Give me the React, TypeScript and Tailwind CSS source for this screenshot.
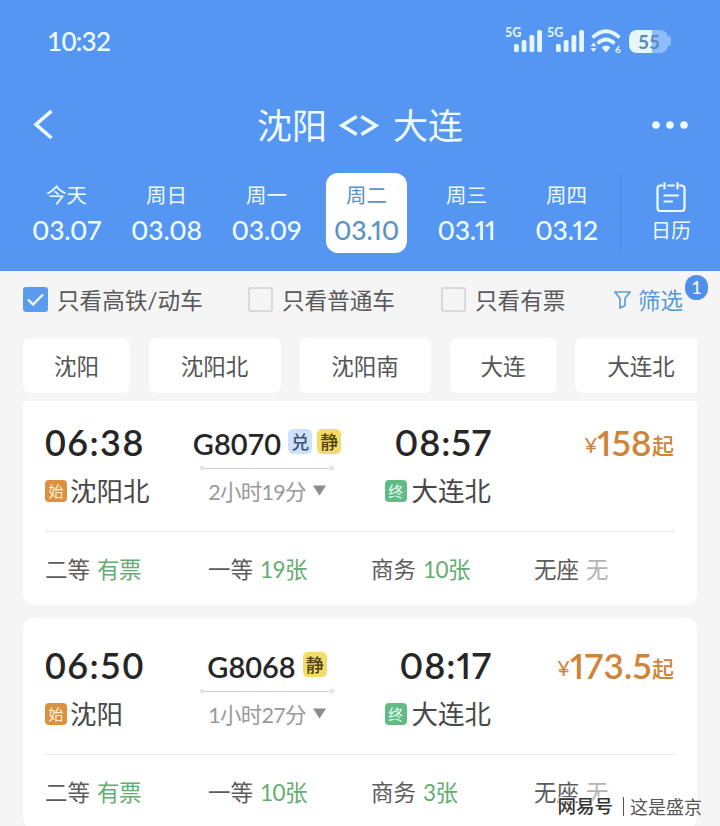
import clsx from "clsx";

interface Seat {
  name: string;
  left: string;
  soldOut?: boolean;
}

interface Train {
  code: string;
  tags: ("兑" | "静")[];
  depart: string;
  arrive: string;
  from: string;
  to: string;
  duration: string;
  price: string;
  seats: Seat[];
}

const days = [
  { label: "今天", date: "03.07" },
  { label: "周日", date: "03.08" },
  { label: "周一", date: "03.09" },
  { label: "周二", date: "03.10", active: true },
  { label: "周三", date: "03.11" },
  { label: "周四", date: "03.12" },
];

const stations = [
  { name: "沈阳", width: "w-[107px]" },
  { name: "沈阳北", width: "w-[132px]" },
  { name: "沈阳南", width: "w-[132px]" },
  { name: "大连", width: "w-[107px]" },
  { name: "大连北", width: "w-[132px]" },
];

const trains: Train[] = [
  {
    code: "G8070",
    tags: ["兑", "静"],
    depart: "06:38",
    arrive: "08:57",
    from: "沈阳北",
    to: "大连北",
    duration: "2小时19分",
    price: "158",
    seats: [
      { name: "二等", left: "有票" },
      { name: "一等", left: "19张" },
      { name: "商务", left: "10张" },
      { name: "无座", left: "无", soldOut: true },
    ],
  },
  {
    code: "G8068",
    tags: ["静"],
    depart: "06:50",
    arrive: "08:17",
    from: "沈阳",
    to: "大连北",
    duration: "1小时27分",
    price: "173.5",
    seats: [
      { name: "二等", left: "有票" },
      { name: "一等", left: "10张" },
      { name: "商务", left: "3张" },
      { name: "无座", left: "无", soldOut: true },
    ],
  },
];

const Signal = () => (
  <svg width="42" height="28" viewBox="0 0 42 28" className="overflow-visible text-[#e6f6ff]">
    <text x="0" y="10" fontSize="12.5" fontWeight="700" fill="currentColor">
      5G
    </text>
    <g fill="currentColor">
      <rect x="9" y="17" width="4.8" height="8" rx="1.6" />
      <rect x="16.7" y="13" width="4.8" height="12" rx="1.6" />
      <rect x="24.5" y="8" width="4.8" height="17" rx="1.6" />
      <rect x="32.2" y="3" width="4.8" height="22" rx="1.6" />
    </g>
  </svg>
);

const Wifi = () => (
  <svg width="32" height="28" viewBox="0 0 32 28" className="text-[#e6f6ff]">
    <g fill="none" stroke="currentColor" strokeWidth="3.6">
      <path d="M2.5 10.5Q16 -2 29.5 10.5" />
      <path d="M7.5 16.5Q16 8.5 24.5 16.5" />
    </g>
    <path d="M11.5 20.5Q16 16.5 20.5 20.5L16 25.5Z" fill="currentColor" />
    <path d="M3.5 15.5L6.5 19.2H.5ZM3.5 25L.5 21.3H6.5Z" fill="currentColor" />
    <text x="25" y="25.5" fontSize="10" fontWeight="700" fill="currentColor">
      6
    </text>
  </svg>
);

const Battery = () => (
  <div className="flex items-center">
    <div className="flex h-[23px] w-[39px] items-center justify-center rounded-lg bg-linear-to-r from-[#e6f6ff] from-58% to-[#8fbcfb] to-58% pl-px text-[19px] leading-none font-bold text-[#5a8bb8]">
      55
    </div>
    <div className="h-2.5 w-[3px] rounded-r bg-[#8fbcfb]" />
  </div>
);

const Header = () => (
  <header className="h-[271px] bg-[#5596f3] text-[#effcff]">
    <div className="flex h-[82px] items-center justify-between pr-[49px] pl-[47px]">
      <span className="text-[26px] leading-none font-medium tracking-[-0.7px]">10:32</span>
      <div className="flex items-center">
        <Signal />
        <Signal />
        <div className="mr-[7px] ml-[1px]">
          <Wifi />
        </div>
        <Battery />
      </div>
    </div>

    <div className="flex h-[86px] items-center justify-between pr-8 pl-[33px]">
      <svg width="22" height="32" viewBox="0 0 22 32" fill="none" stroke="currentColor" strokeWidth="3.6">
        <path d="M18.5 2L3 15.5L18.5 29" />
      </svg>
      <h1 className="ml-[13px] flex items-center text-[35px] leading-none">
        <span>沈阳</span>
        <svg width="42" height="24" viewBox="0 0 42 24" fill="none" stroke="currentColor" strokeWidth="3.5" className="mr-[13px] ml-[11px]">
          <path d="M18.7 3.5L4 12.5L18.7 21.5M23.3 3.5L38 12.5L23.3 21.5" />
        </svg>
        <span>大连</span>
      </h1>
      <svg width="36" height="8" viewBox="0 0 36 8" fill="currentColor">
        <circle cx="4" cy="4" r="3.8" />
        <circle cx="18" cy="4" r="3.8" />
        <circle cx="32" cy="4" r="3.8" />
      </svg>
    </div>

    <div className="flex pt-[5px]">
      <div className="flex w-[617px] pl-[17px]">
        {days.map((day) => (
          <div key={day.date} className="flex w-[100px] shrink-0 justify-center">
            <div
              className={clsx(
                "-ml-px flex h-20 w-[81px] shrink-0 flex-col items-center rounded-xl pt-[11px]",
                day.active && "bg-white text-[#5b93c4]"
              )}
            >
              <span className="text-[20.5px] leading-[22px]">{day.label}</span>
              <span className="mt-2 text-[26.5px] leading-8 font-medium tracking-[-0.2px] proportional-nums">{day.date}</span>
            </div>
          </div>
        ))}
      </div>
      <div className="h-20 w-[5px] bg-linear-to-r from-[#5596f3] to-[#508fec]" />
      <div className="flex h-20 flex-1 flex-col items-center pt-2">
        <svg width="30" height="32" viewBox="0 0 30 32" fill="none" stroke="currentColor" strokeWidth="2.2" strokeLinecap="round">
          <path d="M6 4.5H4.5A3 3 0 0 0 1.5 7.5V27A3 3 0 0 0 4.5 30H25.5A3 3 0 0 0 28.5 27V7.5A3 3 0 0 0 25.5 4.5H24M12 4.5H18M8.5 2V7.5M21.5 2V7.5" />
          <path d="M8.5 14.5H22M8.5 20.5H16" />
        </svg>
        <span className="mt-1.5 text-xl leading-[22px]">日历</span>
      </div>
    </div>
  </header>
);

const Checkbox = ({ label, checked }: { label: string; checked?: boolean }) => (
  <div className="flex items-center gap-[9px]">
    <div
      className={clsx(
        "-mt-px flex h-[25px] w-[25px] items-center justify-center rounded-[3px]",
        checked ? "bg-[#5a9bf0]" : "border-2 border-[#d9d9d9]"
      )}
    >
      {checked && (
        <svg width="17" height="13" viewBox="0 0 17 13" fill="none" stroke="#f0faff" strokeWidth="2.4">
          <path d="M1 6.5L6 11.5L16 1.5" />
        </svg>
      )}
    </div>
    <span className="pt-0.5 text-[22.6px] leading-none whitespace-nowrap">{label}</span>
  </div>
);

const Filters = () => (
  <div className="flex h-[58px] items-center pl-[23px] text-[#595959]">
    <div className="w-[225px]">
      <Checkbox label="只看高铁/动车" checked />
    </div>
    <div className="w-[193px]">
      <Checkbox label="只看普通车" />
    </div>
    <div className="w-[173px]">
      <Checkbox label="只看有票" />
    </div>
    <div className="relative flex items-center gap-[7px] text-[#5599d4]">
      <svg width="17" height="18" viewBox="0 0 17 18" fill="none" stroke="currentColor" strokeWidth="1.6" className="-mt-px">
        <path d="M1 1H16L11 7.5V14.5L6 17V7.5Z" />
      </svg>
      <span className="pt-0.5 text-[22.5px] leading-none">筛选</span>
      <span className="absolute -top-[13px] -right-[25px] flex h-[25px] w-[23px] items-center justify-center rounded-full bg-[#5090ea] text-lg leading-none text-white">
        1
      </span>
    </div>
  </div>
);

const tagColors = {
  兑: "bg-[#cfe1fb] text-[#3d5573]",
  静: "bg-[#f5dc69] text-[#4f4213]",
};

const TrainCard = ({ train }: { train: Train }) => (
  <article className="h-[210px] shrink-0 rounded-[10px] bg-white px-[22px]">
    <div className="flex h-[137px] border-b border-[#e9e9e9] pt-[5px]">
      <div className="w-[140px] pt-[22px]">
        <p className="text-[36px] leading-10 font-semibold tracking-[1.4px] text-[#262626]">{train.depart}</p>
        <div className="mt-[14px] flex items-center gap-[3px] leading-[30px]">
          <span className="flex h-[22px] w-[22px] items-center justify-center rounded bg-[#dc9140] text-[15px] text-[#fff4de]">始</span>
          <span className="text-[26.5px] text-[#484848]">{train.from}</span>
        </div>
      </div>

      <div className="flex w-[164px] flex-col items-center pt-7">
        <div className="flex h-8 items-center gap-[5px]">
          <span className="mr-0.5 text-[29px] leading-8 font-semibold text-[#262626]">{train.code}</span>
          {train.tags.map((tag) => (
            <span
              key={tag}
              className={clsx("-mt-[5px] flex h-[25px] w-6 items-center justify-center rounded-[5px] text-[18px] leading-none font-medium", tagColors[tag])}
            >
              {tag}
            </span>
          ))}
        </div>
        <div className="mt-[6px] flex w-[134px] items-center">
          <i className="h-1 w-1 rounded-full border border-[#cfcfcf]" />
          <i className="h-px flex-1 bg-[#d4d4d4]" />
          <i className="h-1 w-1 rounded-full border border-[#cfcfcf]" />
        </div>
        <div className="mt-[7px] flex h-[30px] items-center gap-[7px] text-[#999]">
          <span className="text-[21.5px] tracking-[-0.7px]">{train.duration}</span>
          <svg width="13" height="11" viewBox="0 0 13 11" fill="#8c8c8c" className="-mt-1">
            <path d="M0 .5H13L6.5 10.5Z" />
          </svg>
        </div>
      </div>

      <div className="w-[142px] pt-[22px] pl-9">
        <p className="w-[107px] text-right text-[36px] leading-10 font-semibold tracking-[0.9px] text-[#262626] proportional-nums">{train.arrive}</p>
        <div className="mt-[14px] flex items-center gap-[5px] leading-[30px]">
          <span className="flex h-[22px] w-[22px] items-center justify-center rounded bg-[#60bb85] text-[15px] text-[#e6fff0]">终</span>
          <span className="text-[26.5px] whitespace-nowrap text-[#484848]">{train.to}</span>
        </div>
      </div>

      <div className="flex h-[62px] flex-1 items-center justify-end pt-[22px] pr-px leading-none text-[#d0843a]">
        <span className="mt-[5px] text-[22px]">¥</span>
        <span className="text-[35px] font-semibold tracking-[0.3px] proportional-nums">{train.price}</span>
        <span className="mt-[8px] text-[22px] font-medium">起</span>
      </div>
    </div>

    <div className="flex h-[73px] items-center pt-1 text-[22.5px] leading-none">
      {train.seats.map((seat) => (
        <div key={seat.name} className="flex w-[163px] shrink-0 items-baseline gap-[7px]">
          <span className="text-[#5c5c5c]">{seat.name}</span>
          <span className={clsx("tracking-[-0.6px]", seat.soldOut ? "text-[#b3b3b3]" : "text-[#64ad72]")}>{seat.left}</span>
        </div>
      ))}
    </div>
  </article>
);

export default function App() {
  return (
    <div className="relative h-[826px] w-[720px] overflow-hidden bg-[#f5f5f5] font-[Lato,'Noto_Sans_CJK_SC',sans-serif]">
      <Header />
      <Filters />

      <div className="mt-[9px] mr-[23px] ml-[23px] flex gap-[18.5px] overflow-hidden">
        {stations.map((s) => (
          <div
            key={s.name}
            className={clsx("flex h-[55px] shrink-0 items-center justify-center rounded-[7px] bg-white pt-[3px] text-[22.5px] leading-none text-[#555]", s.width)}
          >
            {s.name}
          </div>
        ))}
      </div>

      {/* The list is scrolled a little, so the first card loses its top edge */}
      <main className="mx-[23px] mt-2 h-[425px] overflow-hidden">
        <div className="-mt-[6px] flex flex-col gap-[13px]">
          {trains.map((train) => (
            <TrainCard key={train.code} train={train} />
          ))}
        </div>
      </main>

      {/* Publisher watermark over the last card */}
      <div className="absolute right-[18px] bottom-[10px] flex items-center leading-none text-[#555] [text-shadow:1px_1px_1px_#fff,-1px_-1px_1px_#fff]">
        <span className="text-[18.5px] font-medium text-[#333]">网易号</span>
        <i className="mr-[6px] ml-[10px] h-[19px] w-px bg-[#555]" />
        <span className="text-[18px]">这是盛京</span>
      </div>
    </div>
  );
}
